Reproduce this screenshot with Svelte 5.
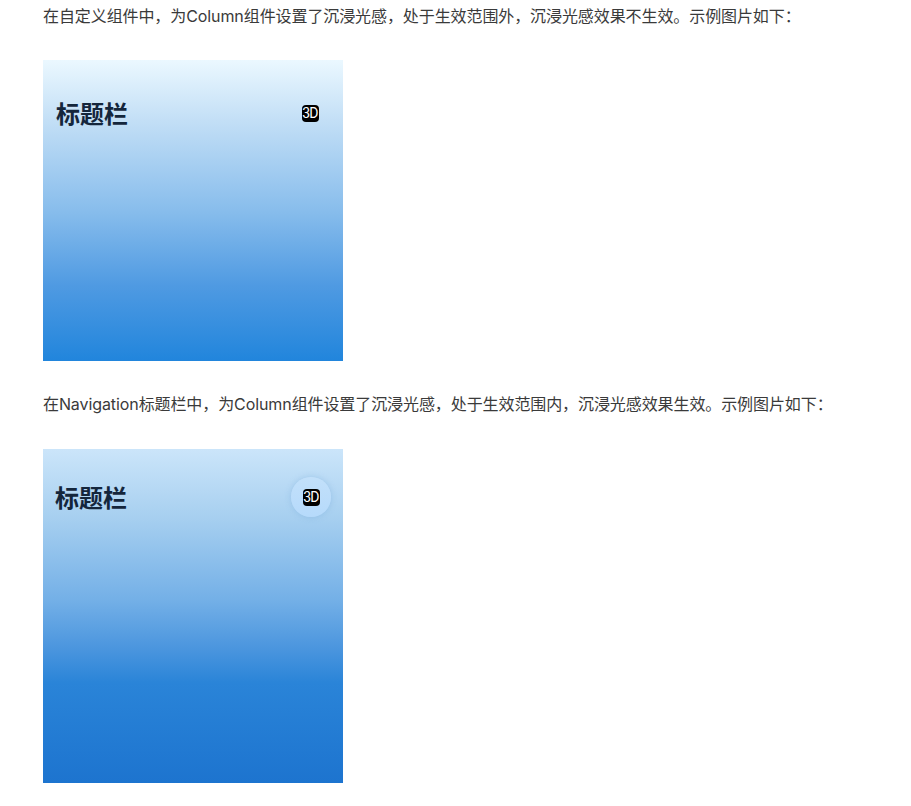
<script>
  const blocks = [
    { text: '在自定义组件中，为Column组件设置了沉浸光感，处于生效范围外，沉浸光感效果不生效。示例图片如下：', kind: 'plain' },
    { text: '在Navigation标题栏中，为Column组件设置了沉浸光感，处于生效范围内，沉浸光感效果生效。示例图片如下：', kind: 'nav' }
  ];
</script>

<main class="page">
  {#each blocks as b}
    <p class="para {b.kind}">{b.text}</p>
    <div class="shot {b.kind}">
      <div class="bar">
        <span class="title">标题栏</span>
        <span class="btn">
          <span class="badge">3D</span>
        </span>
      </div>
    </div>
  {/each}
</main>

<style>
  :global(body) {
    margin: 0;
    background: #fff;
  }
  .page {
    padding: 5px 0 0 43px;
    font-family: Inter, "Noto Sans CJK SC", sans-serif;
  }
  .para {
    margin: 0;
    font-size: 16px;
    line-height: 22px;
    letter-spacing: -0.09px;
    color: #3a3a3a;
    font-weight: 400;
  }
  .shot {
    width: 300px;
    box-sizing: border-box;
  }
  .shot.plain {
    height: 301px;
    margin: 33px 0 32px;
    padding: 33px 13px 0 13px;
    background: linear-gradient(#ebf8ff, #c3dff6 20%, #88bdec 50%, #4f9ae2 75%, #2185dc);
  }
  .shot.nav {
    height: 334px;
    margin-top: 34px;
    padding: 28px 12px 0 12px;
    background: linear-gradient(#cbe5fa, #a8d0f0 20%, #74b0e7 45%, #4a95de 60%, #2a84d8 70%, #1d74cf);
  }
  .bar {
    display: flex;
    align-items: center;
    justify-content: space-between;
    height: 40px;
  }
  .title {
    font-family: "Noto Sans CJK SC", sans-serif;
    font-size: 24px;
    font-weight: 700;
    color: #14263c;
    line-height: 40px;
  }
  .btn {
    width: 40px;
    height: 40px;
    border-radius: 50%;
    display: flex;
    align-items: center;
    justify-content: center;
  }
  .nav .btn {
    background: linear-gradient(#c2e0fa, #b6dafb);
    box-shadow: 0 0 6px rgba(120, 170, 220, 0.45);
  }
  .badge {
    width: 17px;
    height: 17px;
    border-radius: 4px;
    background: #000;
    color: #fff;
    font-family: Roboto, sans-serif;
    font-size: 14px;
    line-height: 17px;
    text-align: center;
    letter-spacing: -0.7px;
  }
</style>
